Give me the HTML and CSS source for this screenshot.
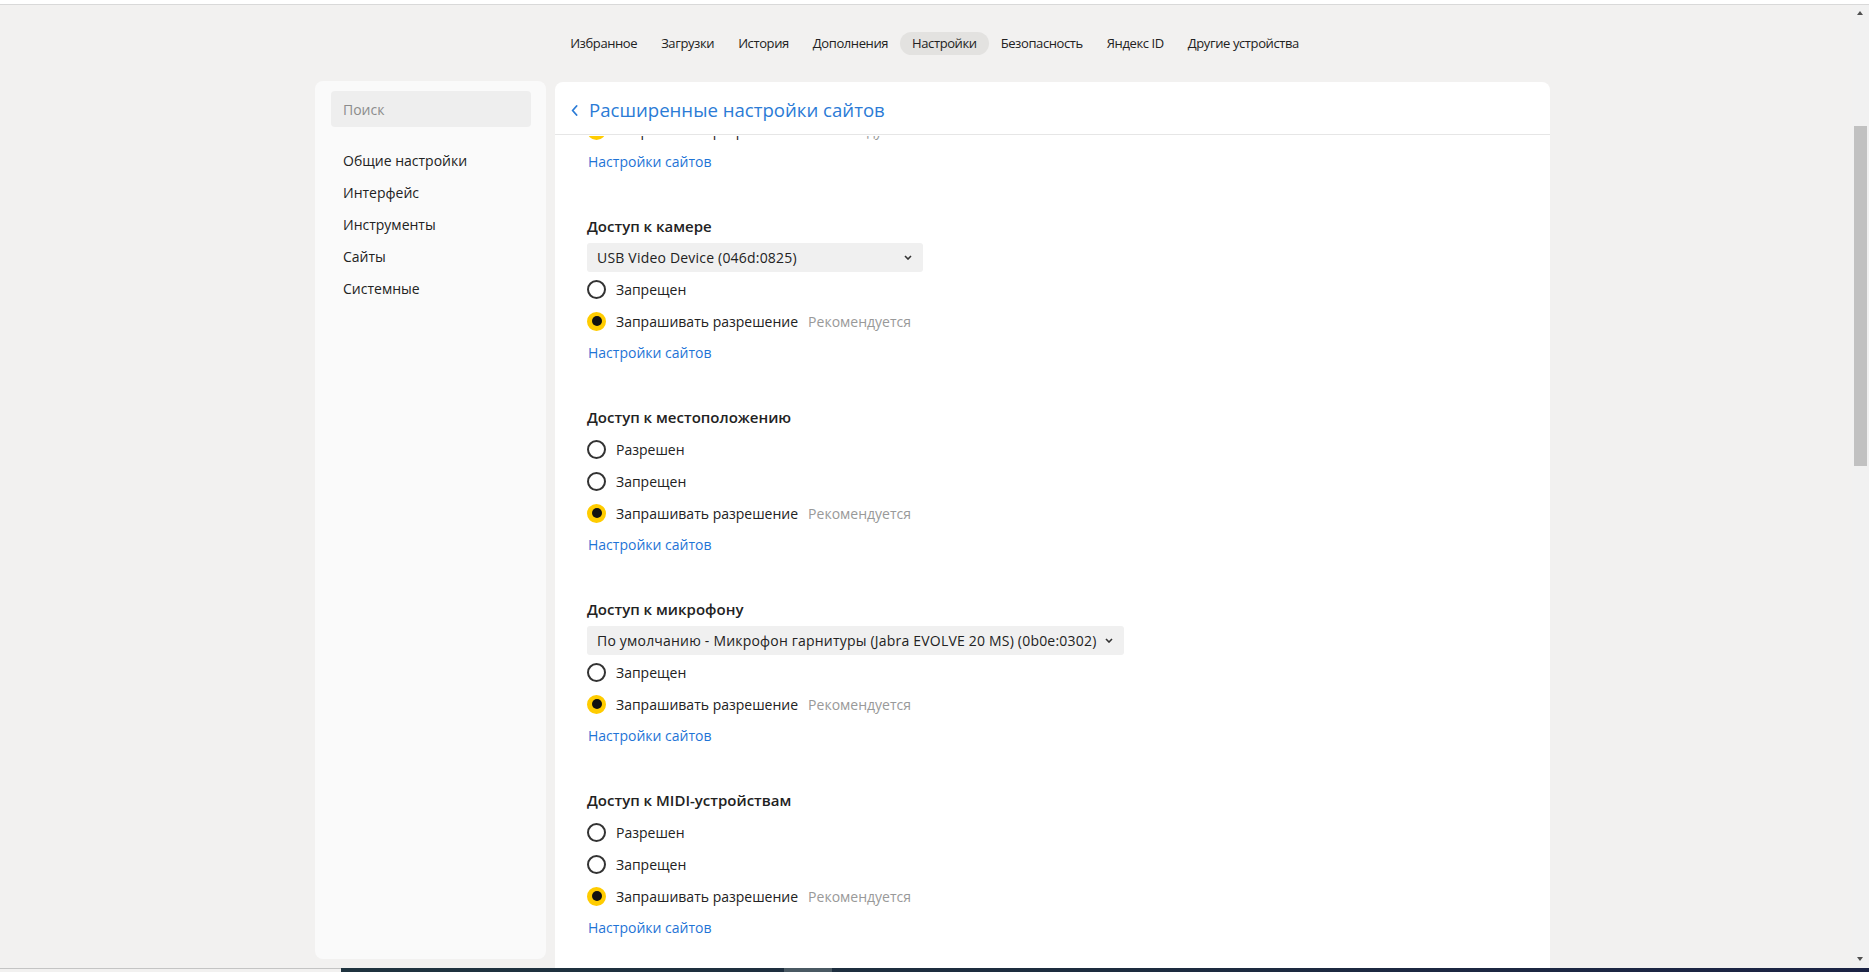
FILE: index.html
```html
<!DOCTYPE html>
<html lang="ru">
<head>
<meta charset="utf-8">
<title>Настройки</title>
<link rel="stylesheet" href="styles.css">
</head>
<body>
<div class="topbar"></div>
<div class="page">
  <nav class="tabs">
    <span class="tab">Избранное</span>
    <span class="tab">Загрузки</span>
    <span class="tab">История</span>
    <span class="tab">Дополнения</span>
    <span class="tab tab--active">Настройки</span>
    <span class="tab">Безопасность</span>
    <span class="tab">Яндекс ID</span>
    <span class="tab">Другие устройства</span>
  </nav>
  <div class="layout">
    <aside class="sidebar">
      <div class="search">Поиск</div>
      <ul class="menu">
        <li>Общие настройки</li>
        <li>Интерфейс</li>
        <li>Инструменты</li>
        <li>Сайты</li>
        <li>Системные</li>
      </ul>
    </aside>
    <main class="panel">
      <header class="panel-head">
        <svg class="back" width="7" height="11" viewBox="0 0 7 11"><path d="M5.6 1 1.6 5.5 5.6 10" fill="none" stroke="#2b7bd6" stroke-width="1.8" stroke-linecap="round" stroke-linejoin="round"/></svg>
        <h1 class="panel-title">Расширенные настройки сайтов</h1>
      </header>
      <div class="panel-body">
        <div class="scroll">
          <section class="section">
            <div class="row"><span class="radio radio--on"></span><span class="label">Запрашивать разрешение</span><span class="hint">Рекомендуется</span></div>
            <a class="link">Настройки сайтов</a>
          </section>

          <section class="section">
            <h2 class="section-title">Доступ к камере</h2>
            <div class="select select--camera"><span class="select-text">USB Video Device (046d:0825)</span><svg width="8" height="5" viewBox="0 0 8 5"><path d="M1 1l3 3 3-3" fill="none" stroke="#333" stroke-width="1.6"/></svg></div>
            <div class="row"><span class="radio"></span><span class="label">Запрещен</span></div>
            <div class="row"><span class="radio radio--on"></span><span class="label">Запрашивать разрешение</span><span class="hint">Рекомендуется</span></div>
            <a class="link">Настройки сайтов</a>
          </section>

          <section class="section">
            <h2 class="section-title">Доступ к местоположению</h2>
            <div class="row"><span class="radio"></span><span class="label">Разрешен</span></div>
            <div class="row"><span class="radio"></span><span class="label">Запрещен</span></div>
            <div class="row"><span class="radio radio--on"></span><span class="label">Запрашивать разрешение</span><span class="hint">Рекомендуется</span></div>
            <a class="link">Настройки сайтов</a>
          </section>

          <section class="section">
            <h2 class="section-title">Доступ к микрофону</h2>
            <div class="select select--mic"><span class="select-text">По умолчанию - Микрофон гарнитуры (Jabra EVOLVE 20 MS) (0b0e:0302)</span><svg width="8" height="5" viewBox="0 0 8 5"><path d="M1 1l3 3 3-3" fill="none" stroke="#333" stroke-width="1.6"/></svg></div>
            <div class="row"><span class="radio"></span><span class="label">Запрещен</span></div>
            <div class="row"><span class="radio radio--on"></span><span class="label">Запрашивать разрешение</span><span class="hint">Рекомендуется</span></div>
            <a class="link">Настройки сайтов</a>
          </section>

          <section class="section">
            <h2 class="section-title">Доступ к MIDI-устройствам</h2>
            <div class="row"><span class="radio"></span><span class="label">Разрешен</span></div>
            <div class="row"><span class="radio"></span><span class="label">Запрещен</span></div>
            <div class="row"><span class="radio radio--on"></span><span class="label">Запрашивать разрешение</span><span class="hint">Рекомендуется</span></div>
            <a class="link">Настройки сайтов</a>
          </section>
        </div>
      </div>
    </main>
  </div>
</div>
<div class="scrollbar">
  <span class="sb-arrow sb-arrow--up"></span>
  <span class="sb-thumb"></span>
  <span class="sb-arrow sb-arrow--down"></span>
</div>
<div class="taskbar">
  <div class="tb-left"></div>
  <div class="tb-right">
    <span class="tb-gap"></span>
    <span class="tb-active"></span>
    <span class="tb-rest"></span>
  </div>
</div>
</body>
</html>
```

FILE: styles.css
```css
* { box-sizing: border-box; }

html, body {
  margin: 0;
  height: 972px;
  overflow: hidden;
}

body {
  position: relative;
  display: flex;
  flex-direction: column;
  background: #f2f1f0;
  color: #222;
  font-family: "Open Sans", "Noto Sans", sans-serif;
}

.topbar {
  flex: none;
  height: 5px;
  background: #fff;
  border-bottom: 1px solid #d9d9d9;
}

.page {
  flex: 1;
  min-height: 0;
  display: flex;
  flex-direction: column;
}

.tabs {
  display: flex;
  justify-content: center;
  margin-top: 27px;
  height: 23px;
}

.tab {
  padding: 0 12px;
  border-radius: 12px;
  font-size: 13px;
  letter-spacing: -0.4px;
  line-height: 23px;
  color: #222;
  white-space: nowrap;
}

.tab--active {
  background: #e3e2e0;
}

.layout {
  flex: 1;
  min-height: 0;
  display: flex;
  align-items: flex-start;
  gap: 9px;
  width: 1239px;
  padding-right: 4px;
  margin: 26px auto 0;
}

.sidebar {
  flex: none;
  width: 231px;
  height: 878px;
  padding: 10px 15px 0 16px;
  background: #fafafa;
  border-radius: 8px;
}

.search {
  height: 36px;
  padding: 1px 0 0 12px;
  border-radius: 4px;
  background: #eeeeee;
  color: #8c8c8c;
  font-size: 14px;
  line-height: 35px;
}

.menu {
  list-style: none;
  margin: 18px 0 0;
  padding: 0 0 0 12px;
}

.menu li {
  height: 32px;
  font-size: 14px;
  line-height: 32px;
  color: #222;
}

.panel {
  flex: none;
  width: 995px;
  align-self: stretch;
  margin-top: 1px;
  display: flex;
  flex-direction: column;
  background: #fff;
  border-radius: 8px 8px 0 0;
  overflow: hidden;
}

.panel-head {
  flex: none;
  height: 53px;
  display: flex;
  align-items: center;
  padding: 4px 16px 0;
  border-bottom: 1px solid #e6e6e6;
}

.back {
  flex: none;
  margin-right: 11px;
}

.panel-title {
  margin: 0;
  font-size: 18.6px;
  font-weight: 400;
  line-height: 1;
  color: #2b7bd6;
  white-space: nowrap;
}

.panel-body {
  flex: 1;
  min-height: 0;
  overflow: hidden;
  padding: 0 32px;
  border-top: 1px solid #fff;
}

.scroll {
  margin-top: -22px;
}

.section + .section {
  margin-top: 32px;
}

.section-title {
  margin: 0;
  height: 32px;
  font-size: 15px;
  font-weight: 600;
  line-height: 32px;
  color: #222;
}

.row {
  height: 32px;
  display: flex;
  align-items: center;
  font-size: 14px;
  white-space: nowrap;
}

.radio {
  flex: none;
  width: 19px;
  height: 19px;
  margin-right: 10px;
  border: 2px solid #333;
  border-radius: 50%;
  display: flex;
  align-items: center;
  justify-content: center;
}

.radio--on {
  border-color: #ffcc00;
  background: #ffcc00;
}

.radio--on::after {
  content: "";
  width: 10px;
  height: 10px;
  border-radius: 50%;
  background: #111;
}

.label {
  color: #222;
}

.hint {
  margin-left: 10px;
  color: #999;
}

.link {
  display: block;
  height: 32px;
  padding-left: 1px;
  font-size: 14px;
  line-height: 32px;
  color: #1f74d6;
  cursor: pointer;
}

.select {
  height: 29px;
  margin: 1px 0 1px;
  padding: 0 11px 0 10px;
  display: flex;
  align-items: center;
  justify-content: space-between;
  background: #f0f0f0;
  border-radius: 3px;
  font-size: 14px;
  color: #222;
  white-space: nowrap;
}

.select-text {
  letter-spacing: 0.2px;
}

.select--camera { width: 336px; }
.select--mic { width: 537px; }

.scrollbar {
  position: absolute;
  top: 5px;
  right: 0;
  width: 17px;
  height: 963px;
  background: #f1f1f1;
}

.sb-arrow {
  position: absolute;
  left: 5px;
  width: 0;
  height: 0;
  border-left: 3.5px solid transparent;
  border-right: 3.5px solid transparent;
}

.sb-arrow--up {
  top: 6px;
  border-bottom: 4px solid #505050;
}

.sb-arrow--down {
  bottom: 7px;
  border-top: 4px solid #505050;
}

.sb-thumb {
  position: absolute;
  top: 121px;
  left: 2px;
  width: 13px;
  height: 340px;
  background: #c1c1c1;
}

.taskbar {
  flex: none;
  height: 4px;
  display: flex;
}

.tb-left {
  width: 341px;
  border-top: 1px solid #c4c4c4;
  background: #f2f1f0;
}

.tb-right {
  flex: 1;
  display: flex;
  background: linear-gradient(90deg, #1f333f 0%, #1d2c3f 50%, #1b2344 100%);
}

.tb-gap { width: 443px; }

.tb-active {
  width: 48px;
  background: #4a5963;
}

.tb-rest { flex: 1; }
```
